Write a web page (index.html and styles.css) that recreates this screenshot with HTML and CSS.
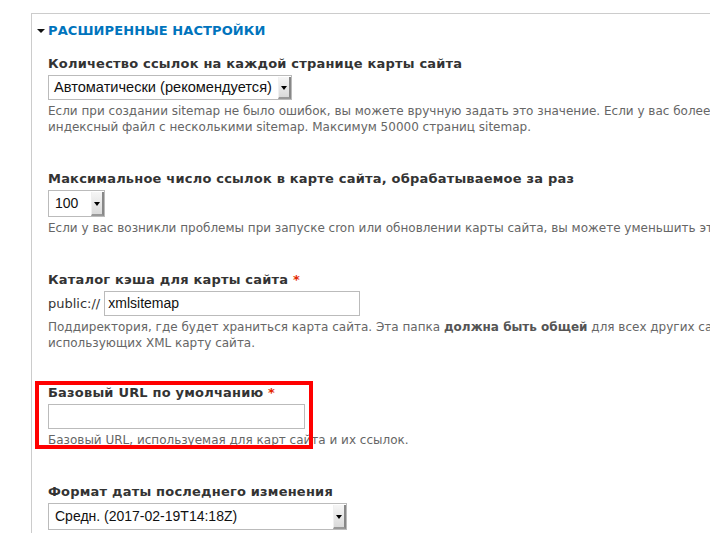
FILE: index.html
```html
<!DOCTYPE html>
<html lang="ru">
<head>
<meta charset="utf-8">
<link rel="stylesheet" href="styles.css">
</head>
<body>
<div class="fieldset">
  <div class="legend"><span class="tri"></span><span class="legend-text">Расширенные настройки</span></div>
  <div class="content">
    <div class="item item1">
      <div class="label">Количество ссылок на каждой странице карты сайта</div>
      <div class="select w1"><span class="val">Автоматически (рекомендуется)</span><span class="btn"><span class="arrow"></span></span></div>
      <div class="desc">Если при создании sitemap не было ошибок, вы можете вручную задать это значение. Если у вас более<br>индексный файл с несколькими sitemap. Максимум 50000 страниц sitemap.</div>
    </div>
    <div class="item item2">
      <div class="label">Максимальное число ссылок в карте сайта, обрабатываемое за раз</div>
      <div class="select w2"><span class="val">100</span><span class="btn"><span class="arrow"></span></span></div>
      <div class="desc">Если у вас возникли проблемы при запуске cron или обновлении карты сайта, вы можете уменьшить это</div>
    </div>
    <div class="item item3">
      <div class="label">Каталог кэша для карты сайта <span class="req">*</span></div>
      <div class="row"><span class="prefix">public://</span><div class="input w3">xmlsitemap</div></div>
      <div class="desc">Поддиректория, где будет храниться карта сайта. Эта папка <b>должна быть общей</b> для всех других сайтов<br>использующих XML карту сайта.</div>
    </div>
    <div class="item item4">
      <div class="label">Базовый URL по умолчанию <span class="req">*</span></div>
      <div class="input w4"></div>
      <div class="desc">Базовый URL, используемая для карт сайта и их ссылок.</div>
      <div class="highlight"></div>
    </div>
    <div class="item item5">
      <div class="label">Формат даты последнего изменения</div>
      <div class="select w5"><span class="val">Средн. (2017-02-19T14:18Z)</span><span class="btn"><span class="arrow"></span></span></div>
    </div>
  </div>
</div>
</body>
</html>
```
FILE: styles.css
```css
html, body {
  margin: 0;
  padding: 0;
  background: #fff;
  overflow: hidden;
  width: 710px;
  height: 533px;
}
body {
  font-family: "DejaVu Sans", sans-serif;
  color: #333;
}
.fieldset {
  margin: 13px 0 0 31px;
  border-top: 1px solid #cccccc;
  border-left: 1px solid #cccccc;
  height: 520px;
  box-sizing: border-box;
  overflow: hidden;
  white-space: nowrap;
}
.legend {
  display: flex;
  align-items: center;
  height: 18px;
  margin-top: 7px;
  padding-left: 5px;
}
.tri {
  width: 0;
  height: 0;
  border-left: 4px solid transparent;
  border-right: 4px solid transparent;
  border-top: 4px solid #111;
  margin-right: 3px;
  margin-top: 1px;
}
.legend-text {
  font-weight: bold;
  font-size: 13px;
  text-transform: uppercase;
  color: #0074bd;
  letter-spacing: 0.1px;
}
.content {
  padding-left: 16px;
  padding-top: 16px;
}
.item {
  position: relative;
}
.item1 { margin-bottom: 35px; }
.item2 { margin-bottom: 35px; }
.item3 { margin-bottom: 33px; }
.item4 { margin-bottom: 35px; }
.label {
  font-weight: bold;
  font-size: 13px;
  line-height: 18px;
  letter-spacing: 0.2px;
  color: #333;
  margin-bottom: 2px;
}
.req {
  color: #e32700;
}
.select {
  display: flex;
  align-items: stretch;
  height: 25px;
  box-sizing: border-box;
  border: 1px solid #bbbbbb;
  background: #fff;
  font-family: "Liberation Sans", Arial, sans-serif;
  font-size: 14px;
  color: #111;
}
.val {
  flex: 1;
  padding-left: 5px;
  line-height: 23px;
}
.w1 .val { font-size: 14.6px; }
.btn {
  width: 13px;
  display: flex;
  align-items: center;
  justify-content: center;
  background: linear-gradient(#f6f6f6, #dadada);
  border-left: 1px solid #f0f0f0;
  border-right: 2px solid #888;
  border-bottom: 2px solid #999;
  box-sizing: border-box;
  margin: 1px 0 0;
}
.arrow {
  width: 0;
  height: 0;
  border-left: 3px solid transparent;
  border-right: 3px solid transparent;
  border-top: 4px solid #000;
  margin-top: 1px;
}
.w1 { width: 244px; }
.w2 { width: 57px; height: 27px; }
.w2 .val { line-height: 25px; padding-left: 6px; }
.w5 { width: 299px; height: 27px; }
.w5 .val { line-height: 25px; padding-left: 6px; }
.row {
  display: flex;
  align-items: center;
}
.prefix {
  font-size: 13px;
  color: #333;
  margin-right: 4px;
}
.input {
  height: 25px;
  box-sizing: border-box;
  border: 1px solid #bbbbbb;
  background: #fff;
  font-family: "Liberation Sans", Arial, sans-serif;
  font-size: 14px;
  color: #111;
  padding-left: 3px;
  line-height: 23px;
}
.w3 { width: 256px; }
.w4 { width: 257px; }
.desc {
  font-size: 12px;
  line-height: 16px;
  color: #666;
  margin-top: 3px;
}
.desc b {
  color: #555;
}
.highlight {
  position: absolute;
  left: -13px;
  top: -3px;
  width: 278px;
  height: 68px;
  box-sizing: border-box;
  border: 4px solid #ff0000;
  pointer-events: none;
}
```
